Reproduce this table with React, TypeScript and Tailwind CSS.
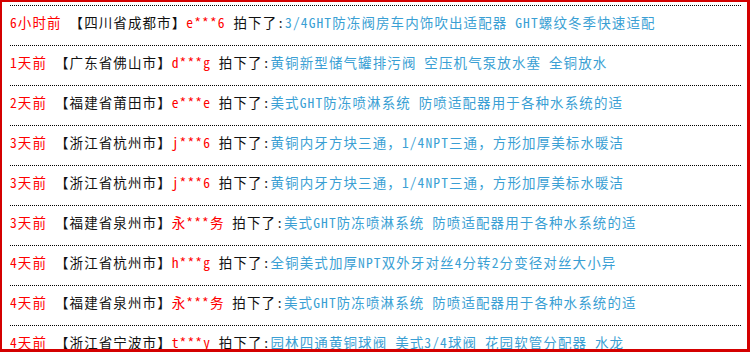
const rows = [
  { time: "6小时前", place: "四川省成都市", user: "e***6", item: "3/4GHT防冻阀房车内饰吹出适配器 GHT螺纹冬季快速适配" },
  { time: "1天前", place: "广东省佛山市", user: "d***g", item: "黄铜新型储气罐排污阀 空压机气泵放水塞 全铜放水" },
  { time: "2天前", place: "福建省莆田市", user: "e***e", item: "美式GHT防冻喷淋系统 防喷适配器用于各种水系统的适" },
  { time: "3天前", place: "浙江省杭州市", user: "j***6", item: "黄铜内牙方块三通，1/4NPT三通，方形加厚美标水暖洁" },
  { time: "3天前", place: "浙江省杭州市", user: "j***6", item: "黄铜内牙方块三通，1/4NPT三通，方形加厚美标水暖洁" },
  { time: "3天前", place: "福建省泉州市", user: "永***务", item: "美式GHT防冻喷淋系统 防喷适配器用于各种水系统的适" },
  { time: "4天前", place: "浙江省杭州市", user: "h***g", item: "全铜美式加厚NPT双外牙对丝4分转2分变径对丝大小异" },
  { time: "4天前", place: "福建省泉州市", user: "永***务", item: "美式GHT防冻喷淋系统 防喷适配器用于各种水系统的适" },
  { time: "4天前", place: "浙江省宁波市", user: "t***y", item: "园林四通黄铜球阀 美式3/4球阀 花园软管分配器 水龙" },
];

export default function App() {
  return (
    <div className="w-[750px] h-[352px] overflow-hidden bg-white border-l-2 border-t-2 border-r-[3px] border-b-[3px] border-[#d40000] pt-[3px] pl-2 pr-[6px] font-['Noto_Sans_Mono_CJK_SC','Noto_Sans_CJK_SC',sans-serif] text-[13.5px] tracking-[1.1px]">
      <ul>
        {rows.map((r, i) => (
          <li
            key={i}
            className="h-[40px] border-t border-dotted border-black leading-[32px] whitespace-nowrap overflow-hidden"
          >
            <span className="text-[#ff0000]">{r.time} </span>
            <span className="text-[#111]">【{r.place}】</span>
            <span className="text-[#ff0000]">{r.user} </span>
            <span className="text-[#111]">拍下了:</span>
            <a href="#" className="text-[#3a9fd4]">
              {r.item}
            </a>
          </li>
        ))}
      </ul>
    </div>
  );
}
